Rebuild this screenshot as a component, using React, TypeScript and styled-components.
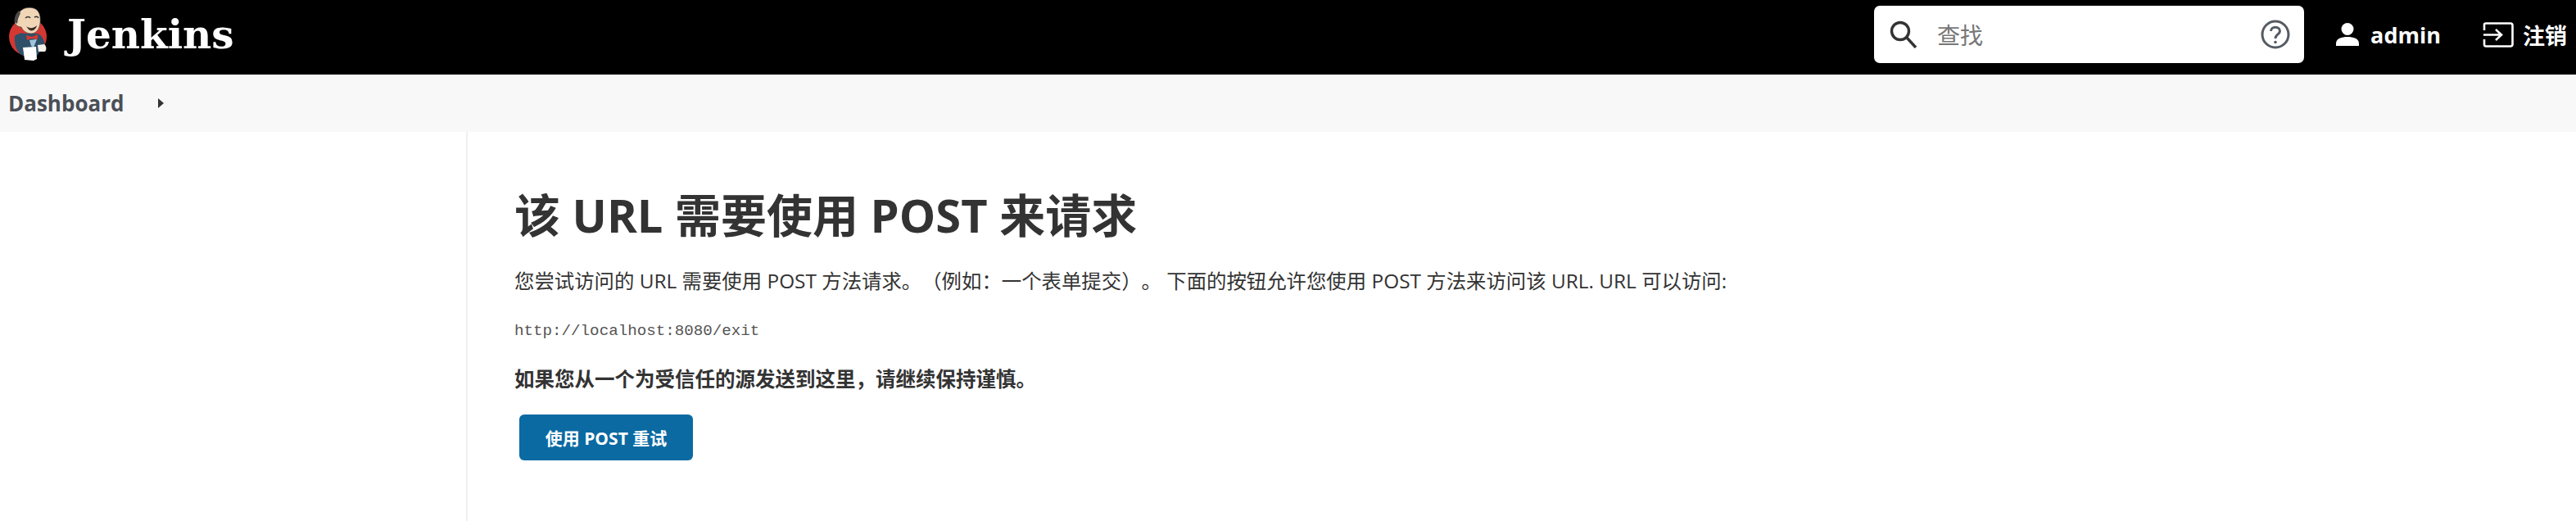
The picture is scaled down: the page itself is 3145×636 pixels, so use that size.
import React from 'react'
import styled, { createGlobalStyle } from 'styled-components'

const sans = `"Open Sans", "Noto Sans CJK SC", sans-serif`

const GlobalStyle = createGlobalStyle`
  html, body {
    margin: 0;
    padding: 0;
    background: #fff;
    font-family: ${sans};
    color: #333;
    text-spacing-trim: space-all;
  }
`

const Page = styled.div`
  width: 3145px;
  height: 636px;
  overflow: hidden;
  display: flex;
  flex-direction: column;
`

const Header = styled.header`
  height: 91px;
  flex: none;
  background: #000;
  display: flex;
  align-items: center;
  padding: 0 11px 7px 10px;
  box-sizing: border-box;
`

const Brand = styled.a`
  display: flex;
  align-items: center;
  gap: 24px;
  color: #fff;
  font-family: "DejaVu Serif", serif;
  font-weight: 700;
  font-size: 48.5px;
  line-height: 1;
  margin-right: auto;
`

const SearchBox = styled.div`
  width: 525px;
  height: 70px;
  background: #fff;
  border-radius: 7px;
  display: flex;
  align-items: center;
  box-sizing: border-box;
  padding: 0 17px 0 19px;
  margin-right: 39px;
`

const Placeholder = styled.span`
  font-size: 28px;
  color: #777;
  margin-left: 24px;
  flex: 1;
`

const HeaderLink = styled.a<{ $gap: number; $ml?: number }>`
  display: flex;
  align-items: center;
  gap: ${(p) => p.$gap}px;
  margin-left: ${(p) => p.$ml || 0}px;
  color: #fff;
  font-weight: 700;
  font-size: 27px;
`

const Breadcrumb = styled.nav`
  height: 70px;
  flex: none;
  background: #f8f8f8;
  display: flex;
  align-items: center;
  padding-left: 10px;
`

const CrumbLink = styled.a`
  font-size: 26px;
  font-weight: 700;
  color: #4a4f57;
`

const CrumbArrow = styled.span`
  width: 0;
  height: 0;
  margin-left: 42px;
  border-left: 7px solid #333;
  border-top: 6.5px solid transparent;
  border-bottom: 6.5px solid transparent;
`

const Layout = styled.div`
  flex: 1;
  display: flex;
`

const SidePanel = styled.aside`
  width: 571px;
  flex: none;
  border-right: 2px solid #f0f0f0;
  box-sizing: border-box;
`

const Main = styled.main`
  padding: 65px 0 0 57px;
`

const Title = styled.h1`
  margin: 0;
  font-size: 56px;
  line-height: 72px;
  font-weight: 700;
  color: #333;
`

const Paragraph = styled.p`
  margin: 28px 0 0;
  font-size: 24.4px;
  line-height: 34px;
  color: #333;
`

const UrlText = styled.p`
  margin: 31px 0 0;
  font-family: "Liberation Mono", monospace;
  font-size: 19.2px;
  line-height: 26px;
  color: #555;
`

const Warning = styled.p`
  margin: 29px 0 0;
  font-size: 24.5px;
  line-height: 34px;
  font-weight: 700;
  color: #333;
`

const RetryButton = styled.button`
  display: block;
  margin: 26px 0 0 6px;
  width: 212px;
  height: 56px;
  border: 0;
  border-radius: 6px;
  background: #0b6aa2;
  color: #fff;
  font-family: ${sans};
  font-size: 21px;
  font-weight: 700;
  padding: 0;
`

const Butler = () => (
  <svg width="48" height="68" viewBox="0 0 48 68">
    <circle cx="24" cy="37" r="23" fill="#d33833" />
    <path d="M8 36 C12 32 18 32 22 33 L36 33 C42 36 45 42 45 50 L38 56 L35 60 L18 60 C11 57 7 47 8 36 Z" fill="#2f5068" />
    <path d="M11 12 C14 2 24 0 31 2 C38 4 40 12 39 20 C38 28 34 33 28 33 C23 33 18 30 16 25 C12 25 8 22 8 18 C8 15 10 14 11 15 Z" fill="#f0d6b7" stroke="#3a3a3a" strokeWidth="0.6" />
    <path d="M13 5 C9 9 7 14 8 19 L11 21 L12 15 L15 8 Z" fill="#4a4a4a" />
    <path d="M21 14 C23 12 26 12 27 14 M32 13 C34 12 36 12 37 14" stroke="#333" strokeWidth="1.5" fill="none" />
    <path d="M22 24 C26 27 31 27 35 23 C34 29 28 31 25 28 Z" fill="#3c2b23" />
    <path d="M22 35 L29 37 L36 34 L36 40 L29 39 L23 41 Z" fill="#d33833" />
    <path d="M26 41 L35 40 L31 50 L28 48 Z" fill="#9fc5da" />
    <path d="M18 50 L34 49 L35 64 L31 66 L20 65 Z" fill="#fff" />
    <path d="M36 47 L44 46 C47 48 47 53 45 55 L37 55 Z" fill="#f4f0ea" />
  </svg>
)

const SearchIcon = () => (
  <svg width="34" height="34" viewBox="0 0 34 34" fill="none" stroke="#333" strokeWidth="3.4">
    <circle cx="13" cy="13" r="10.5" />
    <path d="M21 21 L32 33" />
  </svg>
)

const HelpIcon = () => (
  <svg width="36" height="36" viewBox="0 0 36 36" fill="none" stroke="#555b62">
    <circle cx="18" cy="18" r="16" strokeWidth="3" />
    <path d="M12.5 14 C12.5 7.5 23.5 7.5 23.5 14 C23.5 18 18 18 18 23" strokeWidth="3" />
    <circle cx="18" cy="27.5" r="1.8" fill="#555b62" stroke="none" />
  </svg>
)

const UserIcon = () => (
  <svg width="28" height="28" viewBox="0 0 28 28" fill="#fff">
    <circle cx="14" cy="7.5" r="7.5" />
    <path d="M0 28 V25 C0 19 7 17 14 17 C21 17 28 19 28 25 V28 Z" />
  </svg>
)

const LogoutIcon = () => (
  <svg width="38" height="31" viewBox="0 0 38 31" fill="none" stroke="#fff" strokeWidth="2.6">
    <path d="M2 10 V3 C2 2 3 1.5 4 1.5 H34 C35.5 1.5 36.5 2.5 36.5 4 V27 C36.5 28.5 35.5 29.5 34 29.5 H4 C3 29.5 2 28.5 2 27 V21" />
    <path d="M1 15.5 H22 M16 9 L23 15.5 L16 22" />
  </svg>
)

export default function App() {
  return (
    <Page>
      <GlobalStyle />
      <Header>
        <Brand>
          <Butler />
          Jenkins
        </Brand>
        <SearchBox>
          <SearchIcon />
          <Placeholder>查找</Placeholder>
          <HelpIcon />
        </SearchBox>
        <HeaderLink $gap={14}>
          <UserIcon />
          admin
        </HeaderLink>
        <HeaderLink $gap={11} $ml={51}>
          <LogoutIcon />
          注销
        </HeaderLink>
      </Header>
      <Breadcrumb>
        <CrumbLink>Dashboard</CrumbLink>
        <CrumbArrow />
      </Breadcrumb>
      <Layout>
        <SidePanel />
        <Main>
          <Title>该 URL 需要使用 POST 来请求</Title>
          <Paragraph>
            您尝试访问的 URL 需要使用 POST 方法请求。（例如：一个表单提交）。 下面的按钮允许您使用 POST 方法来访问该 URL. URL 可以访问:
          </Paragraph>
          <UrlText>http://localhost:8080/exit</UrlText>
          <Warning>如果您从一个为受信任的源发送到这里，请继续保持谨慎。</Warning>
          <RetryButton>使用 POST 重试</RetryButton>
        </Main>
      </Layout>
    </Page>
  )
}
